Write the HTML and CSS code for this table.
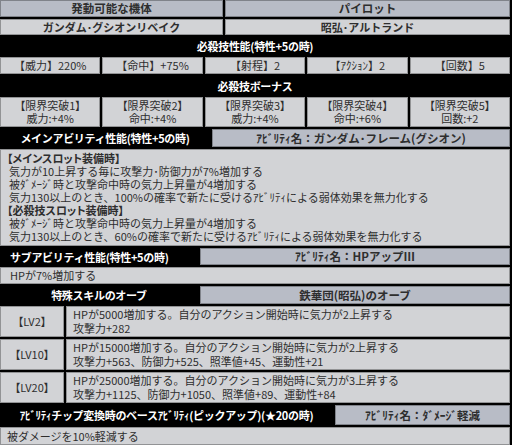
FILE: index.html
```html
<!DOCTYPE html>
<html lang="ja">
<head>
<meta charset="utf-8">
<link rel="stylesheet" href="styles.css">
</head>
<body>
<div class="sheet">
  <div class="row cols-2">
    <div class="cell head h17">発動可能な機体</div>
    <div class="cell head h17">パイロット</div>
  </div>
  <div class="row cols-2">
    <div class="cell light bold h16">ガンダム･グシオンリベイク</div>
    <div class="cell light bold h16">昭弘･アルトランド</div>
  </div>
  <div class="bar h18">必殺技性能(特性+5の時)</div>
  <div class="row cols-5">
    <div class="cell light h17">【威力】220%</div>
    <div class="cell light h17">【命中】+75%</div>
    <div class="cell light h17">【射程】2</div>
    <div class="cell light h17">【ｱｸｼｮﾝ】2</div>
    <div class="cell light h17">【回数】5</div>
  </div>
  <div class="bar h19">必殺技ボーナス</div>
  <div class="row cols-5">
    <div class="cell light two">【限界突破1】<br>威力:+4%</div>
    <div class="cell light two">【限界突破2】<br>命中:+4%</div>
    <div class="cell light two">【限界突破3】<br>威力:+4%</div>
    <div class="cell light two">【限界突破4】<br>命中:+6%</div>
    <div class="cell light two">【限界突破5】<br>回数:+2</div>
  </div>
  <div class="row split-main">
    <div class="bar h18">メインアビリティ性能(特性+5の時)</div>
    <div class="cell head h18">ｱﾋﾞﾘﾃｨ名：ガンダム･フレーム(グシオン)</div>
  </div>
  <div class="cell light block">
    <p class="bold">【メインスロット装備時】</p>
    <p>気力が10上昇する毎に攻撃力･防御力が7%増加する</p>
    <p>被ﾀﾞﾒｰｼﾞ時と攻撃命中時の気力上昇量が4増加する</p>
    <p>気力130以上のとき、100%の確率で新たに受けるｱﾋﾞﾘﾃｨによる弱体効果を無力化する</p>
    <p class="bold">【必殺技スロット装備時】</p>
    <p>被ﾀﾞﾒｰｼﾞ時と攻撃命中時の気力上昇量が4増加する</p>
    <p>気力130以上のとき、60%の確率で新たに受けるｱﾋﾞﾘﾃｨによる弱体効果を無力化する</p>
  </div>
  <div class="row split-sub">
    <div class="bar h17 bar-left">サブアビリティ性能(特性+5の時)</div>
    <div class="cell head h17">ｱﾋﾞﾘﾃｨ名：HPアップⅢ</div>
  </div>
  <div class="cell light text-left h17">HPが7%増加する</div>
  <div class="row split-sub">
    <div class="bar h18">特殊スキルのオーブ</div>
    <div class="cell head h18">鉄華団(昭弘)のオーブ</div>
  </div>
  <div class="row split-lv">
    <div class="cell light lv">【LV2】</div>
    <div class="cell light lv-text">HPが5000増加する。自分のアクション開始時に気力が2上昇する<br>攻撃力+282</div>
  </div>
  <div class="row split-lv">
    <div class="cell light lv">【LV10】</div>
    <div class="cell light lv-text">HPが15000増加する。自分のアクション開始時に気力が2上昇する<br>攻撃力+563、防御力+525、照準値+45、運動性+21</div>
  </div>
  <div class="row split-lv">
    <div class="cell light lv">【LV20】</div>
    <div class="cell light lv-text">HPが25000増加する。自分のアクション開始時に気力が3上昇する<br>攻撃力+1125、防御力+1050、照準値+89、運動性+84</div>
  </div>
  <div class="row split-chip">
    <div class="bar h20">ｱﾋﾞﾘﾃｨチップ変換時のベースｱﾋﾞﾘﾃｨ(ピックアップ)(★20の時)</div>
    <div class="cell head h20">ｱﾋﾞﾘﾃｨ名：ﾀﾞﾒｰｼﾞ軽減</div>
  </div>
  <div class="cell light text-left last h18">被ダメージを10%軽減する</div>
</div>
</body>
</html>
```

FILE: styles.css
```css
html, body {
  margin: 0;
  padding: 0;
  background: #000;
}
body {
  font-family: "Noto Sans CJK JP", "Noto Sans", sans-serif;
  font-size: 11px;
  color: #2e2e2e;
}
.sheet {
  width: 510px;
  display: flex;
  flex-direction: column;
  gap: 2px;
}
.row {
  display: grid;
  gap: 2px;
}
.cols-2 { grid-template-columns: 223px 1fr; }
.cols-5 { grid-template-columns: repeat(5, 1fr); }
.split-main { grid-template-columns: 210px 1fr; }
.split-sub { grid-template-columns: 198px 1fr; }
.split-lv { grid-template-columns: 64px 1fr; }
.split-chip { grid-template-columns: 333px 1fr; }

.cell {
  display: flex;
  align-items: center;
  justify-content: center;
  text-align: center;
  box-shadow: inset 0 0 0 1px rgba(0, 0, 0, 0.3);
  line-height: 13px;
  white-space: nowrap;
  overflow: hidden;
}
.head {
  background: #b8bcc6;
  font-weight: bold;
  font-size: 11.5px;
}
.light {
  background: #d2d3d6;
}
.bold { font-weight: bold; }

.bar {
  display: flex;
  align-items: center;
  justify-content: center;
  color: #fff;
  font-weight: bold;
  font-size: 11px;
  letter-spacing: -0.3px;
  white-space: nowrap;
}
.bar-left {
  justify-content: flex-start;
  padding-left: 10px;
}

.h16 { height: 16px; }
.h17 { height: 17px; }
.h18 { height: 18px; }
.h19 { height: 19px; }
.h20 { height: 20px; }

.two {
  height: 30px;
  line-height: 13px;
  font-feature-settings: "palt";
}
.block {
  display: block;
  text-align: left;
  height: 97px;
  box-sizing: border-box;
  padding: 3px 9px 0;
}
.block p {
  margin: 0;
  line-height: 13px;
}
.block p.bold {
  margin-left: -2px;
  font-feature-settings: "palt";
}
.text-left {
  justify-content: flex-start;
  padding-left: 10px;
}
.last { padding-left: 7px; }
.lv {
  height: 31px;
  font-feature-settings: "palt";
}
.lv-text {
  height: 31px;
  justify-content: flex-start;
  text-align: left;
  padding-left: 7px;
  line-height: 13.5px;
}
```
